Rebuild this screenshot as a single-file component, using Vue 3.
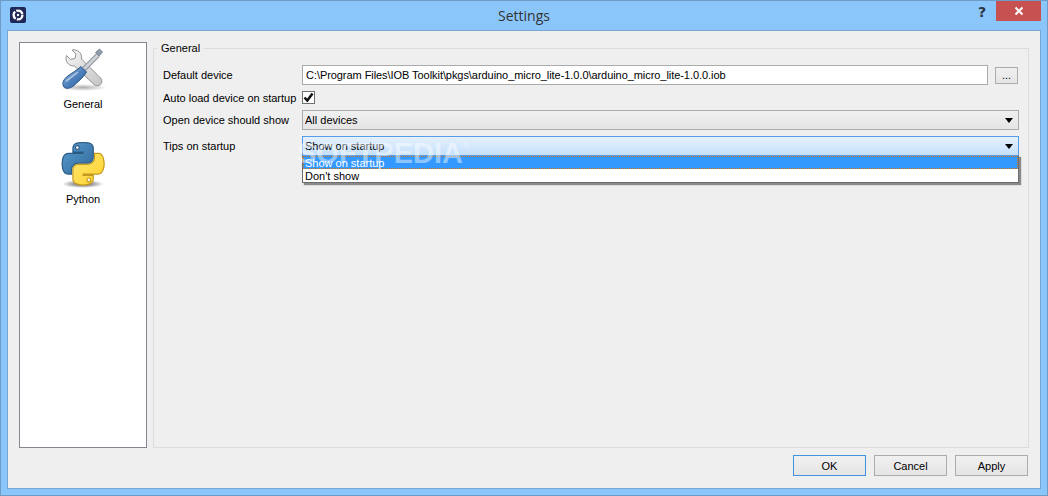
<script setup>
const iconPath = {
  pyBlue: 'M54.9 0C50.3 0 46 .4 42.1 1.1 30.8 3.1 28.7 7.3 28.7 15v10.3h26.8v3.4H18.6C10.8 28.7 4 33.3 1.9 42.3c-2.5 10.2-2.6 16.6 0 27.2 1.9 7.9 6.5 13.6 14.2 13.6h9.3V70.8c0-8.8 7.6-16.6 16.7-16.6h26.8c7.4 0 13.4-6.1 13.4-13.6V15c0-7.3-6.1-12.7-13.4-13.9C64.3.3 59.5 0 54.9 0zM40.4 8.2c2.8 0 5 2.3 5 5.1s-2.2 5.1-5 5.1-5-2.3-5-5.1 2.2-5.1 5-5.1z',
  pyYellow: 'M85.6 28.7v11.9c0 9.2-7.8 17-16.7 17H42.1c-7.3 0-13.4 6.3-13.4 13.6v25.5c0 7.3 6.3 11.5 13.4 13.6 8.5 2.5 16.6 2.9 26.8 0 6.7-2 13.4-5.9 13.4-13.6V86.5H55.5v-3.4h40.2c7.8 0 10.7-5.4 13.4-13.6 2.8-8.4 2.7-16.5 0-27.2-1.9-7.8-5.6-13.6-13.4-13.6H85.6zM70.6 93.3c2.8 0 5 2.3 5 5.1s-2.2 5.1-5 5.1-5-2.3-5-5.1 2.2-5.1 5-5.1z'
}
</script>

<template>
  <div class="window">
    <header class="titlebar">
      <div class="title-left">
        <svg class="app-icon" width="16" height="16" viewBox="0 0 16 16">
          <rect width="16" height="16" rx="2" fill="#1f2757" />
          <circle cx="8" cy="8" r="4.4" fill="none" stroke="#fff" stroke-width="2.4" stroke-dasharray="7.9 1.3" />
          <circle cx="8" cy="8" r="1.2" fill="#fff" />
        </svg>
      </div>
      <div class="title">Settings</div>
      <div class="title-right">
        <span class="help">?</span>
        <div class="close">
          <svg width="10" height="10" viewBox="0 0 10 10">
            <path d="M1.5 1.5l7 7M8.5 1.5l-7 7" stroke="#fff" stroke-width="2" fill="none" />
          </svg>
        </div>
      </div>
    </header>

    <main class="client">
      <div class="content">
        <nav class="sidebar">
          <div class="nav-item">
            <svg class="nav-icon" width="48" height="48" viewBox="0 0 48 48">
              <defs>
                <linearGradient id="steel" x1="0" y1="0" x2="1" y2="1">
                  <stop offset="0" stop-color="#f6f6f6" />
                  <stop offset="1" stop-color="#c4c4c4" />
                </linearGradient>
                <linearGradient id="handle" x1="0" y1="0" x2="1" y2="1">
                  <stop offset="0" stop-color="#a9c6e6" />
                  <stop offset="0.5" stop-color="#4f82bd" />
                  <stop offset="1" stop-color="#2a5a9a" />
                </linearGradient>
                <radialGradient id="shade1">
                  <stop offset="0" stop-color="#000" stop-opacity=".32" />
                  <stop offset="1" stop-color="#000" stop-opacity="0" />
                </radialGradient>
              </defs>
              <ellipse cx="24" cy="42.500" rx="24" ry="3.500" fill="url(#shade1)" />
              <path d="M13 5l4 4-1 4.500-4.500 1-4-4C5.500 16 9.500 21.500 15.500 21l19.500 18.500c2.500 2 5.500 1.500 7-.5s1-4.500-.5-6L22.500 14c1-6-4-10-9.500-9z" fill="url(#steel)" stroke="#929292" stroke-width="1" />
              <path d="M25 24l14-14" stroke="#8d9299" stroke-width="5" fill="none" />
              <path d="M25 24l14-14" stroke="#cdd2d7" stroke-width="3" fill="none" />
              <path d="M36.500 7.500l4-3.500 3 3-3.500 4z" fill="#8e9baa" stroke="#7c8894" stroke-width="1" />
              <path d="M22 21.500l5.500 5.500c-2 4-7 8.500-12 13-4 4-9 4-10.500 2-2-3-1.500-6 2.500-10 5-4 11-7 14.500-10.500z" fill="url(#handle)" stroke="#2b5587" stroke-width="1" />
              <path d="M7 36.500c3-3 8-6.500 12-9.500" stroke="#d4e3f3" stroke-width="1.500" fill="none" opacity=".7" />
            </svg>
            <span>General</span>
          </div>
          <div class="nav-item">
            <svg class="nav-icon" width="48" height="48" viewBox="0 0 48 48">
              <defs>
                <linearGradient id="pyb" x1="0" y1="0" x2="1" y2="1">
                  <stop offset="0" stop-color="#5a9fd4" />
                  <stop offset="1" stop-color="#2f6595" />
                </linearGradient>
                <linearGradient id="pyy" x1="0" y1="0" x2="1" y2="1">
                  <stop offset="0" stop-color="#ffe873" />
                  <stop offset="1" stop-color="#ffd02b" />
                </linearGradient>
                <radialGradient id="shade2">
                  <stop offset="0" stop-color="#000" stop-opacity=".7" />
                  <stop offset="1" stop-color="#000" stop-opacity="0" />
                </radialGradient>
              </defs>
              <ellipse cx="24" cy="44" rx="21" ry="4" fill="url(#shade2)" />
              <g transform="translate(3 2.500) scale(.38)">
                <path :d="iconPath.pyBlue" fill="url(#pyb)" stroke="#2a5a82" stroke-width="3" />
                <path :d="iconPath.pyYellow" fill="url(#pyy)" stroke="#c49a1e" stroke-width="3" />
              </g>
            </svg>
            <span>Python</span>
          </div>
        </nav>

        <fieldset class="group">
          <legend>General</legend>
          <div class="form">
            <div class="row row-input">
              <label>Default device</label>
              <div class="path-input">C:\Program Files\IOB Toolkit\pkgs\arduino_micro_lite-1.0.0\arduino_micro_lite-1.0.0.iob</div>
              <button class="browse">...</button>
            </div>
            <div class="row row-check">
              <label>Auto load device on startup</label>
              <span class="checkbox">
                <svg width="11" height="11" viewBox="0 0 11 11">
                  <path d="M1.500 5.500l2.800 3 5.200-7" stroke="#111" stroke-width="2.500" fill="none" />
                </svg>
              </span>
            </div>
            <div class="row">
              <label>Open device should show</label>
              <div class="combo">
                <span>All devices</span>
                <i class="arrow"></i>
              </div>
            </div>
            <div class="row">
              <label>Tips on startup</label>
              <div class="combo combo-open">
                <span>Show on startup</span>
                <i class="arrow"></i>
                <ul class="popup">
                  <li class="selected">Show on startup</li>
                  <li>Don't show</li>
                </ul>
                <div class="watermark">SOFTPEDIA<sup>®</sup></div>
              </div>
            </div>
          </div>
        </fieldset>
      </div>

      <footer class="buttons">
        <button class="btn btn-default">OK</button>
        <button class="btn">Cancel</button>
        <button class="btn">Apply</button>
      </footer>
    </main>
  </div>
</template>

<style>
html, body {
  margin: 0;
  overflow: hidden;
}
</style>

<style scoped>
.window {
  box-sizing: border-box;
  width: 1048px;
  height: 496px;
  display: flex;
  flex-direction: column;
  background: #8bc6fb;
  border: 1px solid #6f9cc6;
  font-family: "Liberation Sans", Arial, sans-serif;
  font-size: 11px;
  color: #000;
}

.titlebar {
  height: 29px;
  flex: none;
  display: grid;
  grid-template-columns: 1fr auto 1fr;
}
.title-left {
  padding: 6px 0 0 9px;
}
.app-icon {
  display: block;
}
.title {
  font-family: "Open Sans", sans-serif;
  font-size: 14px;
  line-height: 29px;
  color: #333;
}
.title-right {
  display: flex;
  justify-content: flex-end;
  align-items: flex-start;
  padding-right: 6px;
}
.help {
  font-family: "DejaVu Sans", sans-serif;
  font-weight: bold;
  font-size: 14px;
  line-height: 22px;
  color: #2a3440;
  margin-right: 10px;
}
.close {
  width: 45px;
  height: 20px;
  background: #c75050;
  display: flex;
  align-items: center;
  justify-content: center;
}

.client {
  flex: 1;
  min-height: 0;
  margin: 0 6px 6px;
  background: #efefef;
  border: 1px solid #78a7d4;
  padding: 11px 11px 12px;
  display: flex;
  flex-direction: column;
  gap: 7px;
}

.content {
  flex: 1;
  min-height: 0;
  display: flex;
  gap: 6px;
}

.sidebar {
  box-sizing: border-box;
  width: 128px;
  flex: none;
  background: #fff;
  border: 1px solid #828790;
  padding-top: 2px;
}
.nav-item {
  height: 95px;
  display: flex;
  flex-direction: column;
  align-items: center;
  line-height: 14px;
}
.nav-icon {
  display: block;
  margin-bottom: 4px;
}

.group {
  flex: 1;
  min-width: 0;
  margin: 0;
  padding: 11px 9px 0;
  border: 1px solid #dcdcdc;
}
.group legend {
  padding: 0 4px;
  margin-left: -6px;
  line-height: 12px;
  height: 12px;
}

.form {
  display: flex;
  flex-direction: column;
  gap: 6px;
}
.row {
  display: flex;
  align-items: center;
  height: 20px;
}
.row-check {
  height: 13px;
}
.row label {
  width: 139px;
  flex: none;
  white-space: nowrap;
}
.path-input {
  box-sizing: border-box;
  flex: 1;
  height: 20px;
  line-height: 19px;
  padding-left: 3px;
  background: #fff;
  border: 1px solid #ababab;
  white-space: nowrap;
  letter-spacing: -0.06px;
}
.browse {
  box-sizing: border-box;
  width: 23px;
  height: 17px;
  margin-left: 7px;
  margin-right: 1px;
  padding: 0;
  font: inherit;
  line-height: 13px;
  background: linear-gradient(#f0f0f0, #e5e5e5);
  border: 1px solid #acacac;
}
.checkbox {
  box-sizing: border-box;
  width: 13px;
  height: 13px;
  background: #fff;
  border: 1px solid #707070;
  display: flex;
  align-items: center;
  justify-content: center;
}
.combo {
  box-sizing: border-box;
  position: relative;
  flex: 1;
  height: 20px;
  padding-left: 2px;
  line-height: 18px;
  background: linear-gradient(#f0f0f0, #e5e5e5);
  border: 1px solid #acacac;
}
.combo-open {
  background: linear-gradient(#e4f0fd, #c6e0fb);
  border-color: #569de5;
}
.arrow {
  position: absolute;
  right: 5px;
  top: 7px;
  width: 0;
  height: 0;
  border-left: 4px solid transparent;
  border-right: 4px solid transparent;
  border-top: 5px solid #000;
}
.popup {
  box-sizing: border-box;
  position: absolute;
  left: -1px;
  right: -1px;
  top: 18px;
  margin: 0;
  padding: 0;
  height: 28px;
  list-style: none;
  background: #fff;
  border: 1px solid #6d6d6d;
  border-top-color: #569de5;
  box-shadow: 2px 2px 1px #8a8a8a;
  z-index: 2;
}
.popup li {
  box-sizing: border-box;
  height: 13px;
  line-height: 15px;
  padding-left: 2px;
}
.popup .selected {
  background: #3399ff;
  color: #fff;
  border: 1px dotted #d9730f;
  line-height: 13px;
  padding-left: 1px;
}
.watermark {
  position: absolute;
  left: -6px;
  top: 3px;
  z-index: 3;
  font-size: 29px;
  font-weight: bold;
  line-height: 26px;
  color: rgba(255, 255, 255, 0.45);
  white-space: nowrap;
  pointer-events: none;
}
.watermark sup {
  font-size: 9px;
  font-weight: normal;
  vertical-align: 14px;
  line-height: 0;
}

.buttons {
  flex: none;
  display: flex;
  justify-content: flex-end;
  gap: 8px;
  margin-right: 1px;
}
.btn {
  box-sizing: border-box;
  width: 73px;
  height: 21px;
  padding: 0;
  font: inherit;
  color: #000;
  background: linear-gradient(#f0f0f0, #e5e5e5);
  border: 1px solid #acacac;
}
.btn-default {
  border-color: #3f93e0;
}
</style>
